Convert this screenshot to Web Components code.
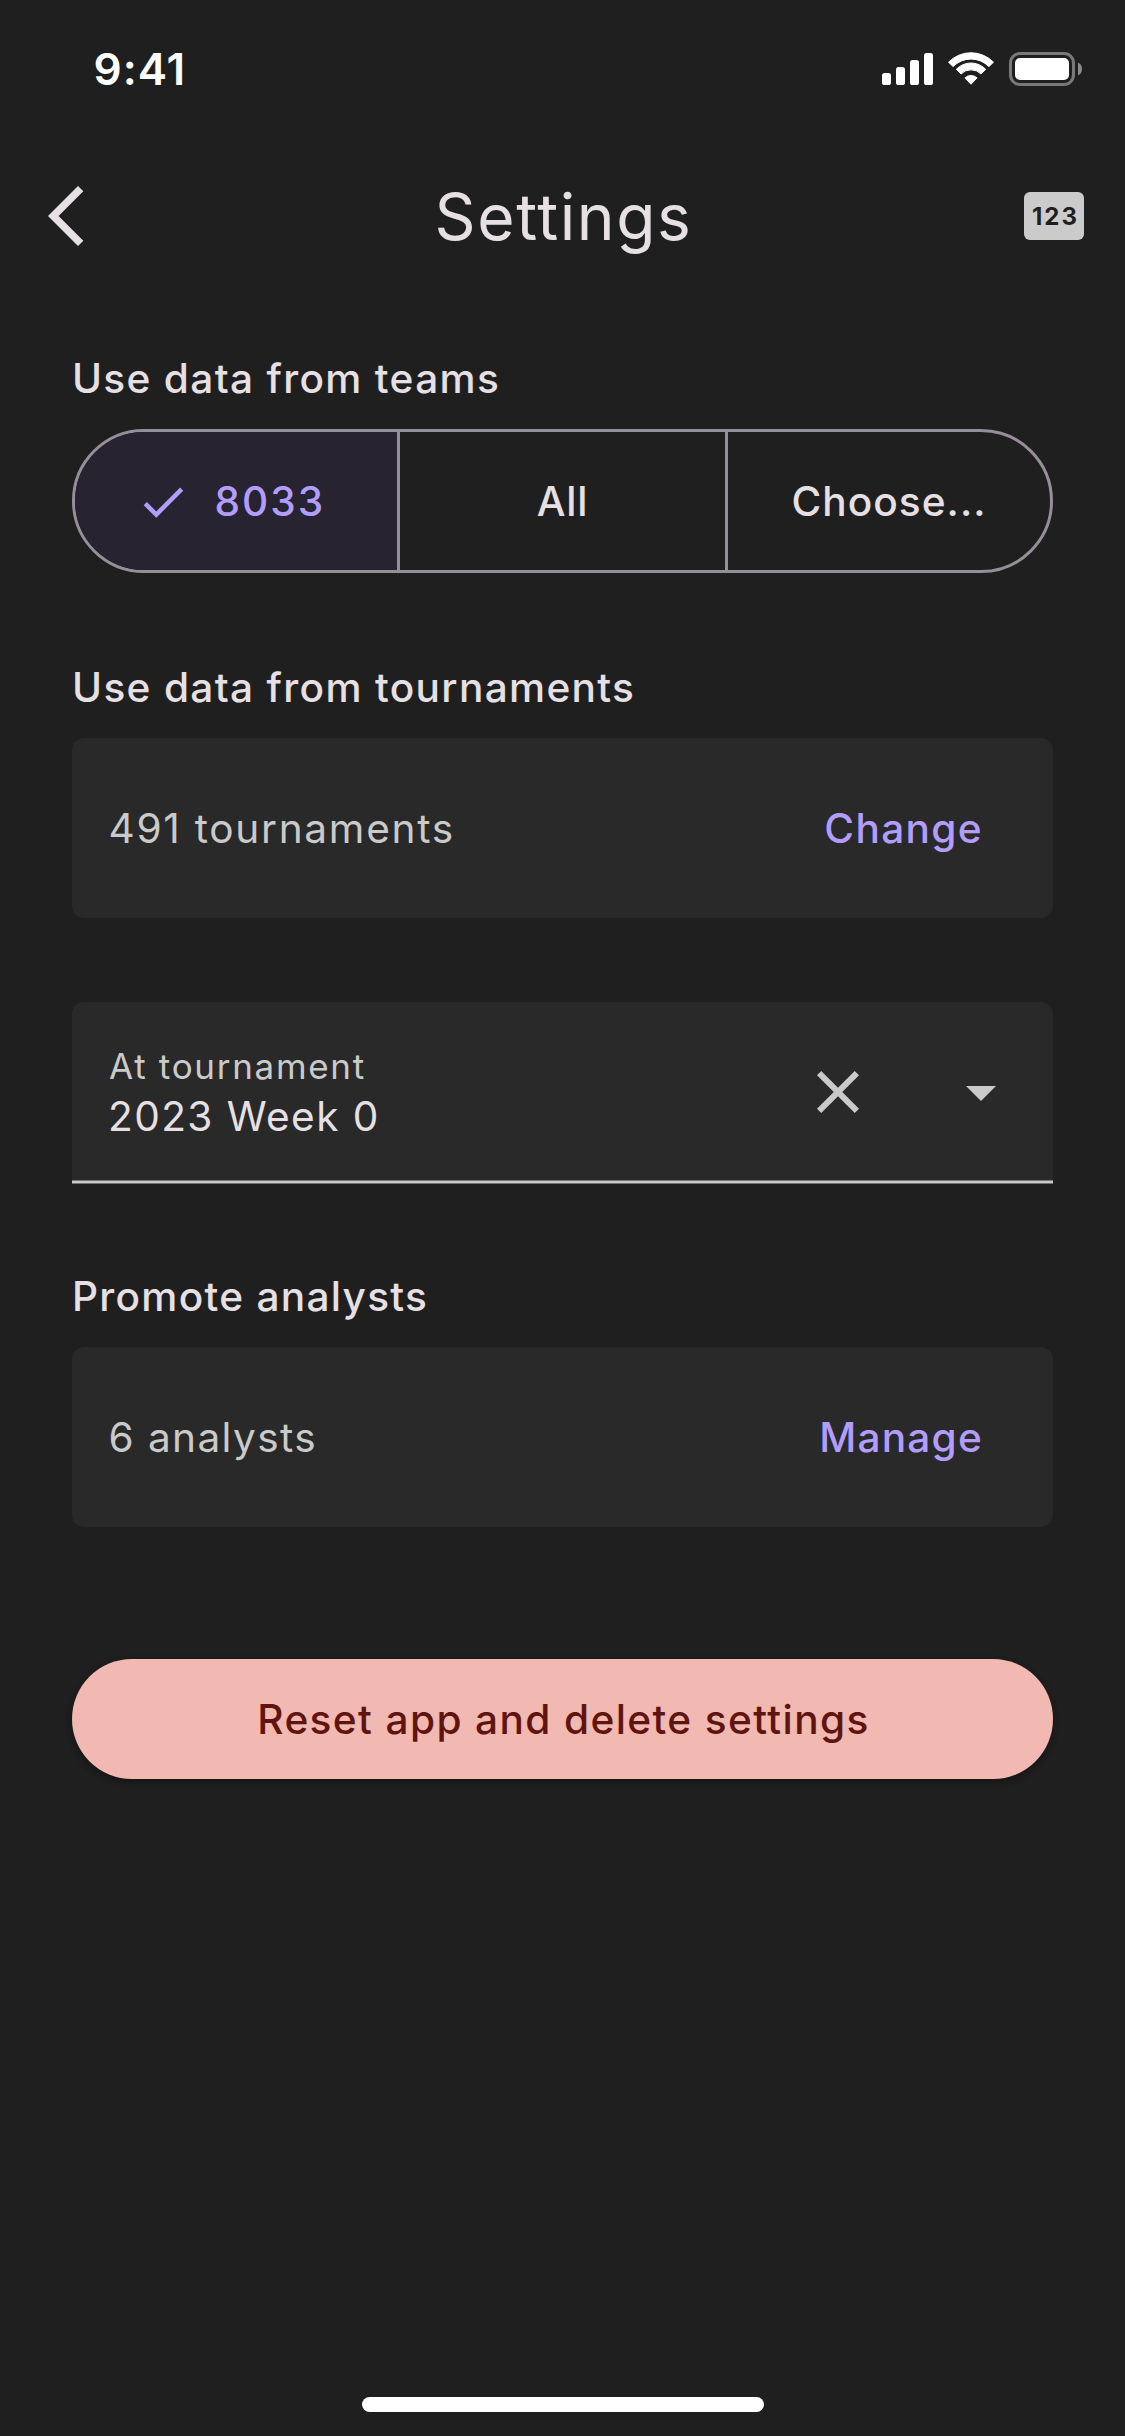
<!DOCTYPE html>
<html lang="en">
<head>
<meta charset="utf-8">
<title>Settings</title>
<style>
  html, body { margin: 0; background: #1f1f1f; }
  body {
    --bg: #1f1f1f; --surface: #292929; --text: #e6e0e5; --muted: #cacaca;
    --accent: #b29dfc; --outline: #968e98; --selected: #282331;
    font: 500 40.6px/60px Inter, "Liberation Sans", sans-serif;
    color: var(--text);
  }
</style>
</head>
<body>
<settings-screen>
  <status-bar slot="top">9:41</status-bar>
  <nav-bar slot="top">Settings</nav-bar>

  <settings-section>
    <span slot="label" style="letter-spacing:1.33px">Use data from teams</span>
    <segmented-control>
      <segment-item selected style="letter-spacing:2px">8033</segment-item>
      <segment-item style="letter-spacing:.8px">All</segment-item>
      <segment-item style="letter-spacing:1.05px">Choose...</segment-item>
    </segmented-control>
  </settings-section>

  <settings-section>
    <span slot="label" style="letter-spacing:1.34px">Use data from tournaments</span>
    <summary-card>
      <span style="letter-spacing:1.72px">491 tournaments</span>
      <span slot="action" style="letter-spacing:1.35px">Change</span>
    </summary-card>
  </settings-section>

  <select-field>
    <span slot="label">At tournament</span>
    <span>2023 Week 0</span>
  </select-field>

  <settings-section>
    <span slot="label" style="letter-spacing:1.29px">Promote analysts</span>
    <summary-card>
      <span style="letter-spacing:1.4px">6 analysts</span>
      <span slot="action" style="letter-spacing:1.2px">Manage</span>
    </summary-card>
  </settings-section>

  <danger-button>Reset app and delete settings</danger-button>
</settings-screen>

<script>
  const define = (name, html) => customElements.define(name, class extends HTMLElement {
    constructor() {
      super();
      this.attachShadow({ mode: 'open' }).innerHTML = html;
    }
  });

  define('settings-screen', `
    <style>
      :host { display: flex; flex-direction: column; box-sizing: border-box; width: 1125px; height: 2436px; background: var(--bg); overflow: hidden; }
      main { display: flex; flex-direction: column; gap: 84px; padding: 54px 72px 0; }
      .home { width: 402px; height: 15px; margin: auto auto 24px; border-radius: 7.5px; background: #fff; flex: none; }
    </style>
    <slot name="top"></slot>
    <main><slot></slot></main>
    <div class="home"></div>`);

  define('status-bar', `
    <style>
      :host { display: flex; align-items: center; justify-content: space-between; height: 138px; padding: 0 43px 0 93.5px; color: #fff; font-weight: 600; font-size: 44px; letter-spacing: 1px; }
      svg { display: block; }
    </style>
    <slot></slot>
    <svg width="200" height="34" viewBox="0 0 200 34" fill="#fff">
      <rect x="0" y="21" width="9" height="12" rx="2.6"/>
      <rect x="14" y="15" width="9" height="18" rx="2.6"/>
      <rect x="28" y="8" width="9" height="25" rx="2.6"/>
      <rect x="42" y="1" width="9" height="32" rx="2.6"/>
      <g transform="translate(66 0)" stroke="#fff" stroke-width="1" stroke-linejoin="round">
        <path d="M.5 10.2A31.5 31.5 0 0 1 45.5 10.2L40.9 14.6A25 25 0 0 0 5.1 14.6Z"/>
        <path d="M8.3 17.3A20.3 20.3 0 0 1 37.7 17.3L33 22A14 14 0 0 0 13 22Z"/>
        <path d="M16.9 25.9A9 9 0 0 1 29.1 25.9L23 32.2Z"/>
      </g>
      <rect x="128.5" y="1.5" width="63" height="31" rx="9.5" fill="none" stroke="#797979" stroke-width="3"/>
      <rect x="133" y="6" width="54" height="22" rx="5"/>
      <path d="M196 10.5C198.6 11.8 200 14 200 17S198.6 22.2 196 23.5Z" fill="#8c8c8c"/>
    </svg>`);

  define('nav-bar', `
    <style>
      :host { display: grid; grid-template-columns: 1fr auto 1fr; align-items: center; height: 156px; padding: 0 41px; font-weight: 400; font-size: 64px; letter-spacing: 1.6px; }
      svg { display: block; margin-left: -11px; }
      .title { padding: 1px 0 0 2px; }
      .badge { justify-self: end; box-sizing: border-box; width: 60px; height: 48px; border-radius: 6px; background: #cbcbcb; color: var(--bg); font-weight: 700; font-size: 24px; line-height: 50px; letter-spacing: 2px; text-align: center; padding-left: 3px; }
    </style>
    <svg width="72" height="72" viewBox="0 0 24 24" fill="#e6e0e5"><path d="M17.77 3.77L16 2 6 12l10 10 1.77-1.77L9.54 12z"/></svg>
    <span class="title"><slot></slot></span>
    <span class="badge">123</span>`);

  define('settings-section', `
    <style>
      :host { display: flex; flex-direction: column; gap: 21px; }
      .label { height: 60px; line-height: 62px; white-space: nowrap; }
    </style>
    <div class="label"><slot name="label"></slot></div>
    <slot></slot>`);

  define('segmented-control', `
    <style>
      :host { display: grid; grid-template-columns: 322px 328px 325px; box-sizing: border-box; height: 144px; border: 3px solid var(--outline); border-radius: 72px; overflow: hidden; }
      ::slotted(:not(:first-child)) { border-left: 3px solid var(--outline); }
    </style>
    <slot></slot>`);

  define('segment-item', `
    <style>
      :host { display: flex; align-items: center; justify-content: center; box-sizing: border-box; padding-top: 2px; }
      :host([selected]) { justify-content: flex-start; gap: 24.5px; padding-left: 61px; background: var(--selected); color: var(--accent); }
      svg { display: none; }
      :host([selected]) svg { display: block; }
    </style>
    <svg width="54" height="54" viewBox="0 0 24 24" fill="currentColor"><path d="M9 16.17L4.83 12l-1.42 1.41L9 19 21 7l-1.41-1.41z"/></svg>
    <slot></slot>`);

  define('summary-card', `
    <style>
      :host { display: flex; align-items: center; justify-content: space-between; box-sizing: border-box; height: 180px; padding: 2px 70px 0 36.5px; border-radius: 12px; background: var(--surface); color: var(--muted); font-weight: 400; }
      .action { color: var(--accent); font-weight: 500; }
    </style>
    <slot></slot>
    <span class="action"><slot name="action"></slot></span>`);

  define('select-field', `
    <style>
      :host {
        display: flex; align-items: center; box-sizing: border-box; height: 182px; margin-bottom: -2px; padding: 0 36px 2px;
        border-radius: 12px 12px 0 0; font-weight: 400;
        background: linear-gradient(var(--surface) 178px, #797979 178px 179px, #cacaca 179px 181px, #747474 181px);
      }
      .text { flex: 1; display: flex; flex-direction: column; }
      .label { font-size: 35px; line-height: 48px; letter-spacing: 1.7px; color: var(--muted); padding-left: 1px; }
      .value { height: 52px; line-height: 54px; letter-spacing: 1.42px; }
      .icons { display: flex; gap: 71px; color: var(--muted); }
      svg { display: block; }
    </style>
    <div class="text">
      <div class="label"><slot name="label"></slot></div>
      <div class="value"><slot></slot></div>
    </div>
    <div class="icons">
      <svg width="72" height="72" viewBox="0 0 24 24" fill="currentColor"><path d="M19 6.41L17.59 5 12 10.59 6.41 5 5 6.41 10.59 12 5 17.59 6.41 19 12 13.41 17.59 19 19 17.59 13.41 12z"/></svg>
      <svg width="72" height="72" viewBox="0 0 24 24" fill="currentColor"><path d="M7 10l5 5 5-5z"/></svg>
    </div>`);

  define('danger-button', `
    <style>
      :host { display: flex; align-items: center; justify-content: center; box-sizing: border-box; height: 120px; margin-top: 48px; padding: 2px 0 0 2px; border-radius: 60px; background: #f2b8b2; color: #601410; letter-spacing: 1.39px; box-shadow: 0 3px 6px rgba(0,0,0,.2), 0 3px 9px rgba(0,0,0,.12); }
    </style>
    <slot></slot>`);
</script>
</body>
</html>
